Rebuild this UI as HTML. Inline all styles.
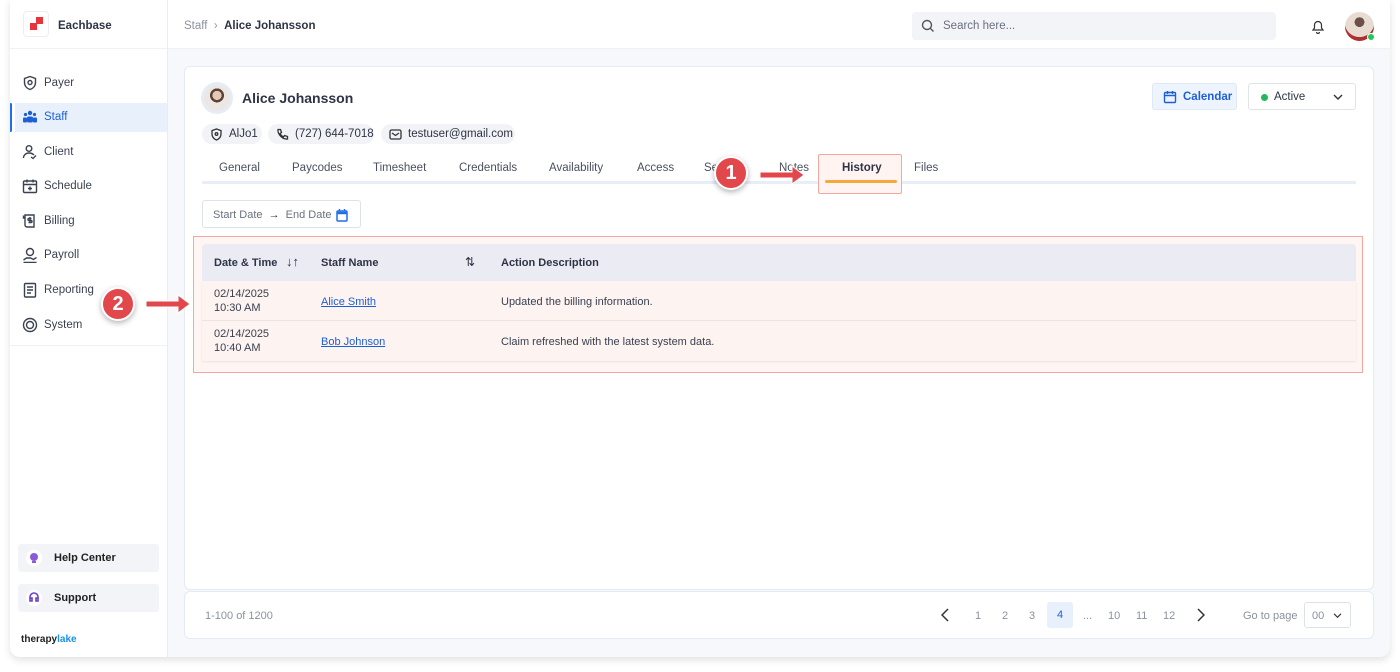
<!DOCTYPE html>
<html><head><meta charset="utf-8"><style>
*{box-sizing:border-box;margin:0;padding:0}
body{width:1400px;height:672px;background:#fff;font-family:"Liberation Sans",sans-serif;color:#2d3445;font-size:12px;position:relative;overflow:hidden}
.frame{position:absolute;left:10px;top:0;width:1380px;height:657px;background:#f6f8fb;border-radius:0 0 10px 10px;box-shadow:0 3px 8px rgba(0,0,0,.12);overflow:hidden}
.side{position:absolute;left:0;top:0;width:158px;height:657px;background:#fff;border-right:1px solid #e8edf4}
.logo{height:49px;border-bottom:1px solid #eef1f6;display:flex;align-items:center;padding-left:13px}
.logobox{width:26px;height:26px;border:1px solid #eee;border-radius:4px;position:relative;margin-right:9px}
.logobox i{position:absolute;background:#e8323c}
.nav{margin-top:19px}
.ni{height:29px;margin-bottom:5.6px;display:flex;align-items:center;padding-left:12px;font-size:11.5px;color:#3a4150;position:relative}
.ni svg{width:16px;height:16px;margin-right:6px;stroke:#3a4150;fill:none;stroke-width:1.4}
.ni.act{background:#e8f0fc;color:#1f5fd6;margin-left:5px;padding-left:7px}
.ni.act:before{content:"";position:absolute;left:-6px;top:0;width:3px;height:29px;background:#1f6fe8;border-radius:2px}
.sbtn{position:absolute;left:8px;width:141px;height:28px;background:#f2f4f8;border-radius:3px;display:flex;align-items:center;font-size:11px;font-weight:bold;color:#222;padding-left:8px}
.sbtn span.c{width:16px;height:16px;border-radius:50%;background:#fff;margin-right:12px;display:flex;align-items:center;justify-content:center}
.top{position:absolute;left:158px;top:0;right:0;height:49px;background:#fff;border-bottom:1px solid #eef1f6}
.card{position:absolute;left:184px;top:66px;width:1190px;height:524px;background:#fff;border:1px solid #e4ebf5;border-radius:6px}
.pag{position:absolute;left:184px;top:591px;width:1190px;height:48px;background:#fff;border:1px solid #e4ebf5;border-radius:6px}
.chip{position:absolute;top:124px;height:20px;background:#f1f3f6;border-radius:10px;display:flex;align-items:center;padding:0 0 0 8px;font-size:11.5px;color:#2d3445;white-space:nowrap}
.chip svg{width:13px;height:13px;margin-right:6px;fill:none;stroke:#333;stroke-width:1.3}
.tab{position:absolute;top:162px;font-size:11.5px;color:#4a5060}
.th{font-weight:bold;font-size:11px;color:#2d3445;position:absolute}
.td{position:absolute;font-size:11px;color:#3a4150;line-height:14px}
a{color:#1f5fd6;text-decoration:underline}
.pn{position:absolute;top:610px;font-size:11px;color:#8a91a0}
.badge{position:absolute;width:34px;height:34px;border-radius:50%;background:#e2474b;border:2px solid #fff;box-shadow:0 2px 6px rgba(0,0,0,.3);color:#fff;font-weight:bold;font-size:20px;display:flex;align-items:center;justify-content:center}
</style></head><body>
<div class="frame">
<div class="side">
 <div class="logo"><div class="logobox"><i style="left:6px;top:11px;width:7px;height:7px"></i><i style="left:12px;top:5px;width:7px;height:7px"></i></div><span style="font-size:11.5px;font-weight:bold;color:#2d3445;margin-top:4px">Eachbase</span></div>
 <div class="nav">
  <div class="ni"><svg viewBox="0 0 16 16"><path d="M8 1.5l5.5 2v4c0 3.5-2.5 6-5.5 7-3-1-5.5-3.5-5.5-7v-4z"/><circle cx="8" cy="7.5" r="2"/></svg>Payer</div>
  <div class="ni act"><svg viewBox="0 0 16 16" style="fill:#1f5fd6;stroke:none"><circle cx="8" cy="4" r="2.2"/><circle cx="3.5" cy="5.5" r="1.6"/><circle cx="12.5" cy="5.5" r="1.6"/><rect x="5" y="7.5" width="6" height="6" rx="1.5"/><rect x="1" y="8.5" width="4" height="5" rx="1"/><rect x="11" y="8.5" width="4" height="5" rx="1"/></svg>Staff</div>
  <div class="ni"><svg viewBox="0 0 16 16"><circle cx="7" cy="4.5" r="2.8"/><path d="M1.5 14c0-3 2.5-5 5.5-5s4 1 5 2M9 13l2 1.5 3-3"/></svg>Client</div>
  <div class="ni"><svg viewBox="0 0 16 16"><rect x="1.5" y="3" width="13" height="11.5" rx="1"/><path d="M1.5 6.5h13M5 1.5v3M11 1.5v3M8 8.5v4M6 10.5h4"/></svg>Schedule</div>
  <div class="ni"><svg viewBox="0 0 16 16"><path d="M3 2h9v12H5a2 2 0 01-2-2zM3 5H1.5V2.5M8 4v6M9.5 5.5H7a1 1 0 000 2h2a1 1 0 010 2H6.5"/></svg>Billing</div>
  <div class="ni"><svg viewBox="0 0 16 16"><circle cx="8" cy="5" r="3.5"/><path d="M1.5 13l3-2h4l3 1.5 3-2M1.5 15.5h13"/></svg>Payroll</div>
  <div class="ni"><svg viewBox="0 0 16 16"><rect x="2.5" y="1.5" width="11" height="13.5" rx="1"/><path d="M5 5h6M5 8h6M5 11h4"/></svg>Reporting</div>
  <div class="ni"><svg viewBox="0 0 16 16"><circle cx="8" cy="8" r="6.5"/><circle cx="8" cy="8" r="3.5"/></svg>System</div>
 </div>
 <div style="position:absolute;left:0;right:0;top:345px;border-top:1px solid #eef1f6"></div>
 <div class="sbtn" style="top:544px"><span class="c"><svg width="12" height="12" viewBox="0 0 12 12"><circle cx="6" cy="5" r="4" fill="#8a5ad8"/><rect x="4" y="9" width="4" height="2" fill="#8a5ad8"/></svg></span>Help Center</div>
 <div class="sbtn" style="top:584px"><span class="c"><svg width="12" height="12" viewBox="0 0 12 12" fill="none" stroke="#6b3fc8" stroke-width="1.6"><path d="M2 7V5a4 4 0 018 0v2M2 6v3h2V6zM8 6v3h2V6z"/></svg></span>Support</div>
 <div style="position:absolute;left:11px;top:634px;font-size:10px;font-weight:bold;color:#222">therapy<span style="color:#1a8fe8">lake</span></div>
</div>
<div class="top">
 <div style="position:absolute;left:16px;top:20px;font-size:11.5px;color:#8a91a0">Staff &nbsp;<span style="color:#999">›</span>&nbsp; <b style="color:#2d3445">Alice Johansson</b></div>
 <div style="position:absolute;left:744px;top:12px;width:364px;height:28px;background:#f2f4f8;border-radius:4px;font-size:11.5px;color:#6a7080;padding:8px 0 0 31px">Search here...<svg style="position:absolute;left:9px;top:7px" width="14" height="14" viewBox="0 0 14 14" fill="none" stroke="#555" stroke-width="1.4"><circle cx="6" cy="6" r="4.5"/><path d="M9.5 9.5l3 3"/></svg></div>
 <svg style="position:absolute;left:1143px;top:19px" width="14" height="15" viewBox="0 0 14 15" fill="none" stroke="#333" stroke-width="1.2"><path d="M2 11h10l-1.5-2V6a3.5 3.5 0 00-7 0v3zM5.5 13a1.5 1.5 0 003 0"/></svg>
 <div style="position:absolute;left:1177px;top:12px;width:29px;height:29px;border-radius:50%;background:radial-gradient(circle at 50% 35%,#6b5048 0 20%,#e8dcd2 21% 62%,#b03030 63%)"></div>
 <div style="position:absolute;left:1199px;top:33px;width:8px;height:8px;border-radius:50%;background:#22c55e;border:1px solid #fff"></div>
</div>
</div>
<div class="card"></div>
<div class="pag"></div>
<div style="position:absolute;left:201px;top:82px;width:32px;height:32px;border-radius:50%;background:#e6ecf5;padding:3px"><div style="width:26px;height:26px;border-radius:50%;background:radial-gradient(circle at 50% 40%,#e5c8b5 0 22%,#5a4438 23% 34%,#ece7e2 35%)"></div></div>
<div style="position:absolute;left:242px;top:90px;font-size:14px;font-weight:bold;color:#2d3445">Alice Johansson</div>
<div class="chip" style="left:202px;width:60px"><svg viewBox="0 0 13 13"><path d="M6.5 1l4.5 1.6v3.4c0 3-2 5-4.5 6-2.5-1-4.5-3-4.5-6V2.6z"/><circle cx="6.5" cy="6" r="1.3"/></svg>AlJo1</div>
<div class="chip" style="left:268px;width:106px"><svg viewBox="0 0 13 13"><path d="M2 1.5l2.5 0 1 3-1.5 1a7 7 0 003.5 3.5l1-1.5 3 1v2.5c-5 .5-10-4.5-9.5-9.5z"/></svg>(727) 644-7018</div>
<div class="chip" style="left:381px;width:134px"><svg viewBox="0 0 13 13"><rect x="1" y="2" width="11" height="9" rx="1.5"/><path d="M3 5l3.5 2.5L10 5"/></svg>testuser@gmail.com</div>
<div style="position:absolute;left:1152px;top:83px;width:85px;height:27px;background:#eef4fd;border:1px solid #e0e8f5;border-radius:3px;font-size:11.5px;font-weight:bold;color:#1f5fd6;padding:7px 0 0 30px">Calendar<svg style="position:absolute;left:10px;top:6px" width="14" height="14" viewBox="0 0 14 14" fill="none" stroke="#1f5fd6" stroke-width="1.4"><rect x="1.5" y="2.5" width="11" height="10" rx="1"/><path d="M1.5 5.5h11M4.5 1v3M9.5 1v3"/></svg></div>
<div style="position:absolute;left:1248px;top:83px;width:108px;height:27px;background:#fff;border:1px solid #e0e4ea;border-radius:3px;font-size:11.5px;color:#2d3445;padding:7px 0 0 25px">Active<span style="position:absolute;left:12px;top:10px;width:7px;height:7px;border-radius:50%;background:#22b85c"></span><svg style="position:absolute;right:12px;top:9px" width="10" height="8" viewBox="0 0 10 8" fill="none" stroke="#333" stroke-width="1.4"><path d="M1 2l4 4 4-4"/></svg></div>
<div class="tab" style="left:219px">General</div>
<div class="tab" style="left:292px">Paycodes</div>
<div class="tab" style="left:373px">Timesheet</div>
<div class="tab" style="left:459px">Credentials</div>
<div class="tab" style="left:549px">Availability</div>
<div class="tab" style="left:637px">Access</div>
<div class="tab" style="left:704px">Se</div>
<div class="tab" style="left:779px">Notes</div>
<div class="tab" style="left:914px">Files</div>
<div style="position:absolute;left:202px;top:181px;width:1154px;height:3px;background:#e8eef8"></div>
<div style="position:absolute;left:818px;top:154px;width:84px;height:40px;background:#fff4f2;border:1px solid #f2a8a0;border-radius:2px"></div>
<div class="tab" style="left:842px;font-weight:bold;color:#2d3445">History</div>
<div style="position:absolute;left:825px;top:180px;width:72px;height:3px;background:#f5a93a;border-radius:2px"></div>
<div class="badge" style="left:714px;top:156px">1</div>
<svg style="position:absolute;left:758px;top:163px" width="50" height="24" viewBox="0 0 50 24"><path d="M2 9h32V3l12 9-12 9v-6H2z" fill="#e2474b" stroke="#fff" stroke-width="1"/></svg>
<div style="position:absolute;left:202px;top:200px;width:159px;height:28px;border:1px solid #dde2ea;border-radius:3px;font-size:11px;color:#6a7080;padding:8px 0 0 10px;white-space:nowrap">Start Date <span style="color:#333;margin:0 3px">→</span> End Date<svg style="position:absolute;left:133px;top:7px" width="12" height="14" viewBox="0 0 12 14" fill="none" stroke="#1f6fe8" stroke-width="1.5"><rect x="1" y="3" width="10" height="10" rx="1"/><path d="M1 5h10" stroke-width="2.5"/><path d="M3.5 1v2M8.5 1v2"/></svg></div>
<div style="position:absolute;left:193px;top:236px;width:1170px;height:137px;border:1px solid #f2a8a0;background:#fff6f4"></div>
<div style="position:absolute;left:202px;top:244px;width:1154px;height:37px;background:#eaebf3;border-radius:4px 4px 0 0"></div>
<div style="position:absolute;left:202px;top:281px;width:1154px;height:80px;background:#fdf3f1;box-shadow:0 1px 2px rgba(0,0,0,.08)"></div>
<div style="position:absolute;left:202px;top:320px;width:1154px;height:1px;background:#ebe4e4"></div>
<div class="th" style="left:214px;top:257px">Date &amp; Time</div>
<div class="th" style="left:286px;top:254px;font-weight:normal;font-size:13px">↓↑</div>
<div class="th" style="left:321px;top:257px">Staff Name</div>
<div class="th" style="left:465px;top:255px;font-weight:normal;font-size:12px">⇅</div>
<div class="th" style="left:501px;top:257px">Action Description</div>
<div class="td" style="left:214px;top:287px">02/14/2025<br>10:30 AM</div>
<div class="td" style="left:321px;top:295px"><a>Alice Smith</a></div>
<div class="td" style="left:501px;top:295px">Updated the billing information.</div>
<div class="td" style="left:214px;top:327px">02/14/2025<br>10:40 AM</div>
<div class="td" style="left:321px;top:335px"><a>Bob Johnson</a></div>
<div class="td" style="left:501px;top:335px">Claim refreshed with the latest system data.</div>
<div class="badge" style="left:101px;top:287px">2</div>
<svg style="position:absolute;left:144px;top:292px" width="50" height="24" viewBox="0 0 50 24"><path d="M2 9h32V3l12 9-12 9v-6H2z" fill="#e2474b" stroke="#fff" stroke-width="1"/></svg>
<div class="pn" style="left:205px">1-100 of 1200</div>
<svg style="position:absolute;left:941px;top:608px" width="8" height="14" viewBox="0 0 8 14" fill="none" stroke="#333" stroke-width="1.5"><path d="M7 1L1 7l6 6"/></svg>
<div class="pn" style="left:975px">1</div><div class="pn" style="left:1002px">2</div><div class="pn" style="left:1029px">3</div>
<div style="position:absolute;left:1047px;top:602px;width:26px;height:26px;background:#e8f0fc;border-radius:3px;color:#1f5fd6;font-size:11px;text-align:center;line-height:26px">4</div>
<div class="pn" style="left:1083px">...</div><div class="pn" style="left:1108px">10</div><div class="pn" style="left:1136px">11</div><div class="pn" style="left:1163px">12</div>
<svg style="position:absolute;left:1197px;top:608px" width="8" height="14" viewBox="0 0 8 14" fill="none" stroke="#333" stroke-width="1.5"><path d="M1 1l6 6-6 6"/></svg>
<div class="pn" style="left:1243px">Go to page</div>
<div style="position:absolute;left:1304px;top:602px;width:47px;height:26px;border:1px solid #dde2ea;border-radius:3px;font-size:11px;color:#8a91a0;padding:7px 0 0 7px">00<svg style="position:absolute;right:8px;top:9px" width="9" height="7" viewBox="0 0 10 8" fill="none" stroke="#333" stroke-width="1.4"><path d="M1 2l4 4 4-4"/></svg></div>
</body></html>
